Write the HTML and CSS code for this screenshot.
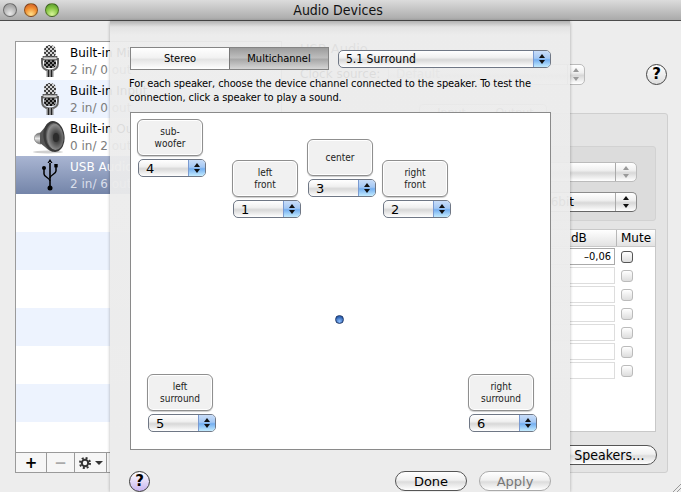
FILE: index.html
```html
<!DOCTYPE html>
<html lang="en">
<head>
<meta charset="utf-8">
<title>Audio Devices</title>
<link rel="stylesheet" href="styles.css">
</head>
<body>
<svg class="defs" width="0" height="0" aria-hidden="true">
  <defs>
    <pattern id="mesh" width="4" height="4" patternUnits="userSpaceOnUse">
      <rect width="4" height="4" fill="#d4d4d4"/>
      <rect width="2" height="2" fill="#404040"/>
      <rect x="2" y="2" width="2" height="2" fill="#404040"/>
    </pattern>
    <pattern id="meshd" width="4" height="4" patternUnits="userSpaceOnUse">
      <rect width="4" height="4" fill="#808080"/>
      <rect width="2" height="2" fill="#111"/>
      <rect x="2" y="2" width="2" height="2" fill="#111"/>
    </pattern>
    <radialGradient id="cone" cx="0.6" cy="0.55" r="0.6">
      <stop offset="0" stop-color="#1c1c1c"/>
      <stop offset="0.45" stop-color="#5a5a5a"/>
      <stop offset="0.8" stop-color="#8c8c8c"/>
      <stop offset="1" stop-color="#444"/>
    </radialGradient>
    <linearGradient id="chrome" x1="0" y1="0" x2="0" y2="1">
      <stop offset="0" stop-color="#6a6a6a"/>
      <stop offset="0.5" stop-color="#e4e4e4"/>
      <stop offset="1" stop-color="#777"/>
    </linearGradient>
    <symbol id="mic" viewBox="0 0 20 34">
      <path d="M2 14v5c0 5 3 7.500 8 7.500s8-2.500 8-7.500v-5" fill="none" stroke="#666" stroke-width="2"/>
      <rect x="4" y="1" width="12" height="13" rx="5.500" fill="url(#mesh)"/>
      <rect x="4" y="15" width="12" height="9" rx="4" fill="url(#meshd)"/>
      <rect x="3" y="12.500" width="14" height="3.500" fill="url(#chrome)" stroke="#333" stroke-width=".6"/>
      <rect x="6.500" y="26" width="7" height="7" fill="#888"/>
      <path d="M8.500 26v7M11.500 26v7" stroke="#222"/>
    </symbol>
  </defs>
</svg>
<div class="window">
  <header class="titlebar">
    <div class="lights">
      <span class="light light-gray"></span>
      <span class="light light-orange"></span>
      <span class="light light-green"></span>
    </div>
    <h1 class="title">Audio Devices</h1>
  </header>

  <div class="body">
    <section class="devices">
      <ul class="device-list">
        <li class="device">
          <span class="device-icon"><svg width="20" height="34"><use href="#mic"/></svg></span>
          <div class="device-text"><b>Built-in Microphone</b><small>2 in/ 0 out</small></div>
        </li>
        <li class="device alt">
          <span class="device-icon"><svg width="20" height="34"><use href="#mic"/></svg></span>
          <div class="device-text"><b>Built-in Input</b><small>2 in/ 0 out</small></div>
        </li>
        <li class="device">
          <span class="device-icon">
            <svg width="36" height="34" viewBox="0 0 36 34">
              <ellipse cx="16" cy="32" rx="15" ry="1.500" fill="#d0d0d0"/>
              <path d="M9 13c-3 0-6 1-6.500 4.500C2 21 5 24 9 24z" fill="url(#chrome)" stroke="#666" stroke-width=".6"/>
              <path d="M21 1c-3 0-6 3-8 6l-5 6v10l5 4c3 3 6 4.500 8 4.500z" fill="#565656"/>
              <ellipse cx="22" cy="16.500" rx="10.500" ry="15.500" transform="rotate(-8 22 16.500)" fill="#3a3a3a"/>
              <ellipse cx="22.500" cy="16.500" rx="9" ry="13.500" transform="rotate(-8 22.500 16.500)" fill="url(#cone)"/>
              <ellipse cx="24" cy="17.500" rx="3" ry="4.500" fill="#2c2c2c"/>
            </svg>
          </span>
          <div class="device-text"><b>Built-in Output</b><small>0 in/ 2 out</small></div>
        </li>
        <li class="device selected">
          <span class="device-icon">
            <svg width="16" height="34" viewBox="0 0 16 34">
              <path d="M8 1 5.500 5h5zM7.200 4h1.600v27H7.200z" fill="#000"/>
              <circle cx="8" cy="30" r="2.500" fill="#000"/>
              <path d="M2 11v5c0 3 6 4 6 7M14 8v5c0 3-6 4-6 7" fill="none" stroke="#000" stroke-width="1.500"/>
              <circle cx="2" cy="10" r="2" fill="#000"/>
              <rect x="12.300" y="6" width="3.400" height="3.400" fill="#000"/>
            </svg>
          </span>
          <div class="device-text"><b>USB Audio Device</b><small>2 in/ 6 out</small></div>
        </li>
        <li class="device"></li>
        <li class="device alt"></li>
        <li class="device"></li>
        <li class="device alt"></li>
        <li class="device"></li>
        <li class="device alt"></li>
      </ul>
      <div class="list-tools">
        <span class="tool tool-add">+</span>
        <span class="tool tool-remove">−</span>
        <span class="tool tool-gear">
          <svg width="12" height="12" viewBox="0 0 12 12"><circle cx="6" cy="6" r="3.200" fill="none" stroke="#333" stroke-width="2"/><circle cx="6" cy="6" r="5" fill="none" stroke="#333" stroke-width="2" stroke-dasharray="2 1.930"/></svg>
          <i class="caret"></i>
        </span>
      </div>
    </section>

    <section class="detail">
      <h2 class="detail-name">USB Audio</h2>
      <div class="clock-row">
        <span class="clock-label">Clock source:</span>
        <div class="popup popup-plain popup-off clock-popup"><span>Default</span><i class="arrows"></i></div>
        <span class="help help-plain">?</span>
      </div>
      <div class="tabs"><span class="tab">Input</span><span class="tab">Output</span></div>
      <div class="group">
        <div class="format-box">
          <div class="popup popup-plain popup-off format-popup"><span>Format</span><i class="arrows"></i></div>
          <div class="popup popup-plain format-popup"><span>44100,0 Hz  2ch-16bit</span><i class="arrows"></i></div>
        </div>
        <div class="mixer">
          <div class="mixer-head"><span class="mixer-db">dB</span><span class="mixer-mute">Mute</span></div>
          <div class="mixer-row"><span class="db-field">–0,06</span><span class="check"></span></div>
          <div class="mixer-row off"><span class="db-field"></span><span class="check"></span></div>
          <div class="mixer-row off"><span class="db-field"></span><span class="check"></span></div>
          <div class="mixer-row off"><span class="db-field"></span><span class="check"></span></div>
          <div class="mixer-row off"><span class="db-field"></span><span class="check"></span></div>
          <div class="mixer-row off"><span class="db-field"></span><span class="check"></span></div>
          <div class="mixer-row off"><span class="db-field"></span><span class="check"></span></div>
        </div>
        <div class="configure-row"><span class="pill configure">Configure Speakers…</span></div>
      </div>
    </section>
  </div>

  <div class="sheet">
    <div class="sheet-top">
      <div class="segmented">
        <span class="seg">Stereo</span>
        <span class="seg seg-on">Multichannel</span>
      </div>
      <div class="popup popup-aqua layout-popup"><span>5.1 Surround</span><i class="arrows"></i></div>
    </div>
    <p class="instructions">For each speaker, choose the device channel connected to the speaker. To test the<br>connection, click a speaker to play a sound.</p>
    <div class="stage">
      <div class="speaker spk-sub">
        <button class="spk-btn">sub-<br>woofer</button>
        <div class="popup popup-aqua spk-popup"><span>4</span><i class="arrows"></i></div>
      </div>
      <div class="speaker spk-lf">
        <button class="spk-btn">left<br>front</button>
        <div class="popup popup-aqua spk-popup"><span>1</span><i class="arrows"></i></div>
      </div>
      <div class="speaker spk-c">
        <button class="spk-btn">center</button>
        <div class="popup popup-aqua spk-popup"><span>3</span><i class="arrows"></i></div>
      </div>
      <div class="speaker spk-rf">
        <button class="spk-btn">right<br>front</button>
        <div class="popup popup-aqua spk-popup"><span>2</span><i class="arrows"></i></div>
      </div>
      <div class="speaker spk-ls">
        <button class="spk-btn">left<br>surround</button>
        <div class="popup popup-aqua spk-popup"><span>5</span><i class="arrows"></i></div>
      </div>
      <div class="speaker spk-rs">
        <button class="spk-btn">right<br>surround</button>
        <div class="popup popup-aqua spk-popup"><span>6</span><i class="arrows"></i></div>
      </div>
      <span class="listener"></span>
    </div>
    <div class="sheet-bottom">
      <span class="help help-purple">?</span>
      <div class="sheet-actions">
        <span class="pill">Done</span>
        <span class="pill pill-off">Apply</span>
      </div>
    </div>
  </div>
  <svg class="grip" width="8" height="8" viewBox="0 0 8 8"><path d="M0 8 8 0M4 8l4-4" stroke="#999" fill="none"/></svg>
</div>
</body>
</html>
```

FILE: styles.css
```css
* { box-sizing: border-box; }
html, body { margin: 0; padding: 0; }
body {
  width: 681px;
  height: 492px;
  overflow: hidden;
  background: #ededed;
  font-family: "DejaVu Sans", sans-serif;
  color: #000;
}
.defs { position: absolute; }
.window { position: relative; width: 681px; height: 492px; overflow: hidden; background: #ededed; }

/* Title bar */
.titlebar {
  position: relative;
  height: 21px;
  display: flex;
  align-items: center;
  justify-content: center;
  background: linear-gradient(#dcdcdc, #aaaaaa);
  border-bottom: 1px solid #4c4c4c;
}
.lights { position: absolute; left: 3px; top: 3px; display: flex; gap: 7px; }
.light { width: 14px; height: 14px; border-radius: 50%; border: 1px solid rgba(0,0,0,.4); }
.light-gray { background: radial-gradient(circle at 50% 80%, #e8e8e8, #a8a8a8 70%); }
.light-orange { background: radial-gradient(circle at 50% 85%, #ffe08a, #f08a2c 55%, #c4562a); }
.light-green { background: radial-gradient(circle at 50% 85%, #d8f59a, #84c440 55%, #4f8f2a); }
.title { margin: 0; font: 400 14px "DejaVu Sans Condensed", "DejaVu Sans", sans-serif; color: #111; padding-right: 5px; }

/* Background window */
.body { display: flex; padding: 20px 13px 0 15px; gap: 16px; }
.devices { width: 267px; height: 432px; display: flex; flex-direction: column; border: 1px solid #9a9a9a; background: #fff; flex: none; }
.device-list { list-style: none; margin: 0; padding: 0; flex: 1; overflow: hidden; }
.device { height: 38px; display: flex; align-items: center; }
.device.alt { background: #edf3fe; }
.device.selected { background: linear-gradient(#a9b5d2, #7485a9); color: #fff; }
.device-icon { width: 54px; display: flex; justify-content: center; flex: none; padding-left: 13px; }
.device-text { display: flex; flex-direction: column; gap: 3px; font-size: 12px; line-height: 14px; }
.device-text b { font-weight: 400; }
.device-text small { font-size: 12px; color: #7c7c7c; }
.selected .device-text small { color: #d9deea; }
.list-tools { height: 20px; display: flex; border-top: 1px solid #9a9a9a; flex: none; background: #f6f6f6; }
.tool { display: flex; align-items: center; justify-content: center; border-right: 1px solid #9a9a9a; font-size: 15px; font-weight: 700; }
.tool-add { width: 31px; }
.tool-remove { width: 28px; color: #aaa; }
.tool-gear { width: 32px; gap: 4px; }
.caret { width: 0; height: 0; border: 4px solid transparent; border-top: 4px solid #333; border-bottom: 0; }

.detail { width: 370px; display: flex; flex-direction: column; flex: none; }
.detail-name { margin: 0; font-size: 13px; font-weight: 400; padding: 0 0 0 2px; height: 22px; color: #333; }
.clock-row { display: flex; align-items: center; gap: 8px; height: 22px; font-size: 12px; padding-left: 2px; position: relative; }
.clock-label { width: 80px; white-space: nowrap; }
.popup.clock-popup { width: 197px; height: 21px; margin-right: 53px; }
.clock-popup > span { padding-left: 12px; }
.help {
  width: 21px; height: 21px; border-radius: 50%; display: flex; align-items: center; justify-content: center;
  font-size: 15px; font-weight: 700; border: 1px solid #444;
  background: linear-gradient(#fff, #ddd);
  flex: none;
}
.tabs { display: flex; align-self: center; height: 18px; margin-top: 19px; margin-bottom: -9px; position: relative; border: 1px solid #bbb; border-radius: 4px; background: #f4f4f4; font-size: 11px; }
.tab { width: 63px; text-align: center; line-height: 16px; color: #777; }
.group { height: 360px; border: 1px solid #cfcfcf; border-radius: 3px; background: #e4e4e4; padding: 32px 11px 0 11px; display: flex; flex-direction: column; }
.format-box { height: 75px; margin-left: 12px; border: 1px solid #d2d2d2; border-radius: 3px; background: #dcdcdc; display: flex; flex-direction: column; align-items: flex-end; gap: 10px; padding: 15px 18px 0 0; font-size: 12px; flex: none; }
.popup.format-popup { width: 230px; height: 20px; }
.format-popup > span { margin-left: auto; padding: 0 41px 0 0; }
.popup-off.format-popup > span { padding-right: 70px; }
.format-popup .arrows { width: 21px; }
.mixer { margin: 8px 0 0 12px; height: 203px; background: #fff; border: 1px solid #c8c8c8; font-size: 11px; flex: none; }
.mixer-head { height: 17px; display: flex; align-items: center; background: linear-gradient(#fff, #e2e2e2); border-bottom: 1px solid #c8c8c8; font-size: 12px; }
.mixer-db { flex: 1; padding-left: 248px; }
.mixer-mute { width: 39px; border-left: 1px solid #b8b8b8; text-align: center; line-height: 16px; }
.mixer-row { height: 19px; display: flex; justify-content: flex-end; align-items: center; }
.db-field { width: 120px; height: 17px; border: 1px solid #aaa; background: #fff; text-align: right; padding-right: 3px; font: 11px/15px "DejaVu Sans Condensed", "DejaVu Sans", sans-serif; }
.mixer-row.off .db-field { border-color: #ddd; }
.check { width: 12px; height: 12px; border: 1px solid #555; border-radius: 3px; background: linear-gradient(#fff, #ddd); margin: 0 22px 0 6px; }
.mixer-row.off .check { border-color: #bbb; }
.configure-row { display: flex; justify-content: flex-end; margin: 13px -1px 0 0; }
.pill.configure { width: 160px; padding: 0; white-space: nowrap; font: 14px "DejaVu Sans Condensed", "DejaVu Sans", sans-serif; }

/* Shared controls */
.pill {
  display: flex; align-items: center; justify-content: center;
  width: 72px; height: 20px; border-radius: 10px; font-size: 13px;
  border: 1px solid #555;
  background: linear-gradient(#fff 0%, #f0f0f0 45%, #dcdcdc 55%, #fff 100%);
}
.pill-off { border-color: #aaa; color: #777; }
.popup {
  display: flex; align-items: center; justify-content: space-between;
  height: 18px; border-radius: 5px; border: 1px solid #8c8c8c; border-bottom-color: #666;
  background: linear-gradient(#fff, #f0f0f0 40%, #d8d8d8 55%, #fff);
  overflow: hidden;
}
.popup > span { padding-left: 7px; white-space: pre; }
.arrows {
  position: relative; display: block; width: 17px; height: 100%; flex: none;
  border-left: 1px solid #aaa;
}
.arrows::before, .arrows::after {
  content: ""; position: absolute; left: 50%; margin-left: -3px; width: 0; height: 0;
  border-left: 3px solid transparent; border-right: 3px solid transparent;
}
.arrows::before { top: 3px; border-bottom: 4px solid #111; }
.arrows::after { bottom: 3px; border-top: 4px solid #111; }
.popup-aqua { border-color: #6f7785; }
.popup-aqua .arrows {
  background: linear-gradient(#c9ddf8, #a4c8f4 45%, #73aef0 55%, #c4ecff);
  border-left-color: #7a9ad0;
}
.popup-off { color: #999; border-color: #bbb; }
.popup-off .arrows::before { border-bottom-color: #999; }
.popup-off .arrows::after { border-top-color: #999; }

/* Sheet */
.sheet {
  position: absolute; left: 110px; top: 21px; width: 460px; height: 471px;
  background: linear-gradient(rgba(176,176,176,.97), rgba(226,226,226,.95) 6px, rgba(236,236,236,.93) 14px, rgba(236,236,236,.93) 120px, rgba(236,236,236,.97) 230px, #ececec 420px);
  box-shadow: 0 0 3px rgba(0,0,0,.3);
  padding: 26px 19px 0 20px;
  display: flex; flex-direction: column;
  font-family: "DejaVu Sans Condensed", "DejaVu Sans", sans-serif;
}
.sheet-top { display: flex; align-items: center; gap: 9px; height: 23px; }
.segmented { display: flex; width: 199px; height: 23px; border: 1px solid #858585; flex: none; }
.seg { flex: 1; display: flex; align-items: center; justify-content: center; font-size: 11px; background: linear-gradient(#fff, #f2f2f2 45%, #e4e4e4 55%, #fff); }
.seg-on { flex: none; width: 99px; border-left: 1px solid #777; background: linear-gradient(#9c9c9c, #bdbdbd 45%, #a8a8a8 55%, #d6d6d6); }
.layout-popup { width: 213px; font-size: 12px; }
.instructions { margin: 7px 0 0 -1px; font-size: 11px; line-height: 14px; height: 28px; letter-spacing: -.1px; white-space: nowrap; }
.stage { position: relative; width: 421px; height: 338px; margin-top: 7px; background: #fff; border: 1px solid #8a8a8a; flex: none; }
.speaker { position: absolute; display: flex; flex-direction: column; gap: 3px; width: 69px; }
.spk-btn {
  width: 66px; height: 37px; padding: 0; border: 1px solid #8f8f8f; border-radius: 6px; background: #f1f1f1;
  box-shadow: inset 0 0 0 1px #fff, 0 1px 1px rgba(0,0,0,.2); font: 10px/12px "DejaVu Sans Condensed", "DejaVu Sans", sans-serif; color: #222;
}
.spk-popup { width: 68px; margin-left: 1px; font: 13px "DejaVu Sans", sans-serif; }
.spk-sub { left: 6px; top: 6px; }
.spk-lf { left: 101px; top: 47px; }
.spk-c { left: 176px; top: 26px; }
.spk-rf { left: 251px; top: 47px; }
.spk-ls { left: 16px; top: 261px; }
.spk-rs { left: 337px; top: 261px; }
.listener {
  position: absolute; left: 204px; top: 202px; width: 9px; height: 9px; border-radius: 50%;
  border: 1px solid #223a6a; background: radial-gradient(circle at 50% 75%, #8fc0ff, #2a5fb0 70%);
}
.sheet-bottom { display: flex; justify-content: space-between; align-items: center; margin: 20px 0 0 -1px; height: 22px; }
.help-purple { background: linear-gradient(#fff, #c8b4f0); border-color: #3c3c3c; font-family: "DejaVu Sans", sans-serif; }
.sheet-actions { display: flex; gap: 12px; font-family: "DejaVu Sans", sans-serif; }
.sheet-actions .pill { font-family: "DejaVu Sans", sans-serif; }

.grip { position: absolute; right: 0; bottom: 0; }
```
